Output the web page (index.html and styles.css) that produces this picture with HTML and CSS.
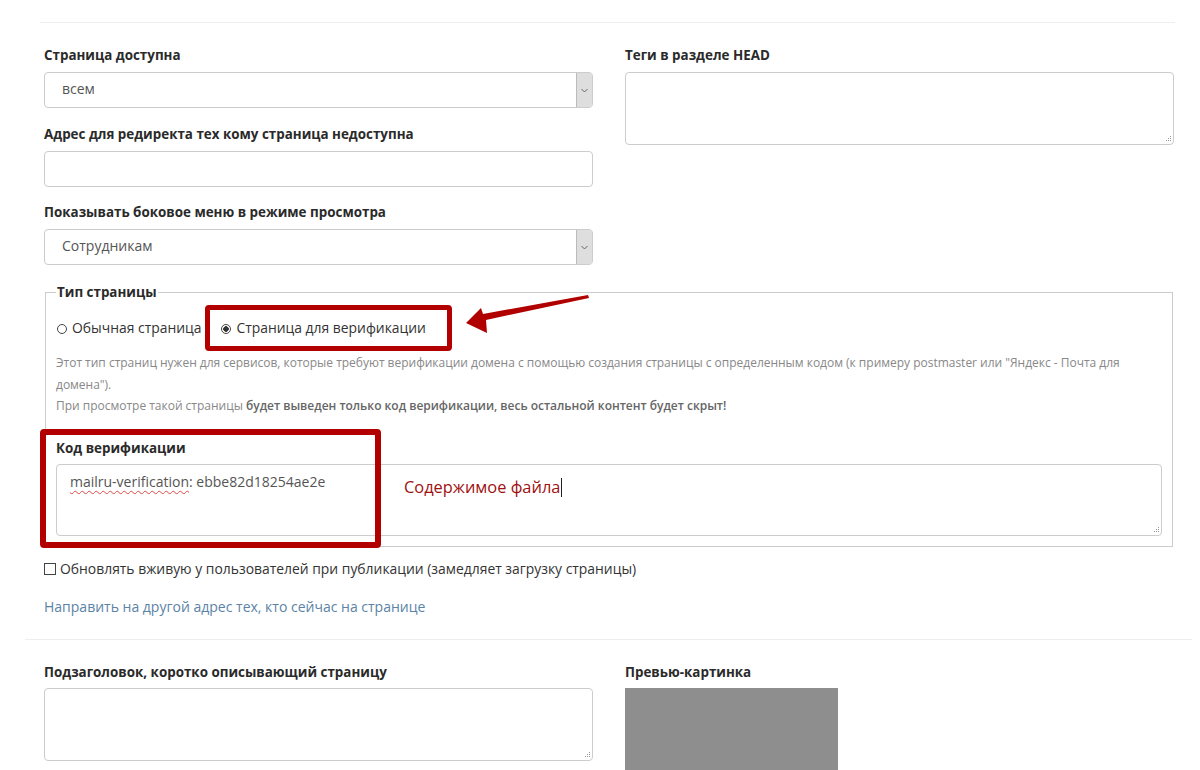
FILE: index.html
```html
<!doctype html>
<html lang="ru">
  <head>
    <meta charset="utf-8" />
    <title>Настройки страницы</title>
    <link rel="stylesheet" href="styles.css">
  </head>
  <body>
    <div class="page">
      <div class="rule"></div>

      <div class="columns">
        <div class="col">
          <div class="field">
            <label>Страница доступна</label>
            <div class="select">
              <span class="select-value">всем</span>
              <span class="select-btn"><svg width="7" height="5" viewBox="0 0 7 5"><path d="M0.5 1 L3.5 4 L6.5 1" fill="none" stroke="#666" stroke-width="1"/></svg></span>
            </div>
          </div>
          <div class="field">
            <label>Адрес для редиректа тех кому страница недоступна</label>
            <div class="input"></div>
          </div>
          <div class="field">
            <label>Показывать боковое меню в режиме просмотра</label>
            <div class="select">
              <span class="select-value">Сотрудникам</span>
              <span class="select-btn"><svg width="7" height="5" viewBox="0 0 7 5"><path d="M0.5 1 L3.5 4 L6.5 1" fill="none" stroke="#666" stroke-width="1"/></svg></span>
            </div>
          </div>
        </div>
        <div class="col">
          <div class="field">
            <label>Теги в разделе HEAD</label>
            <div class="textarea head-tags">
              <svg class="grip" width="7" height="7" viewBox="0 0 7 7"><path d="M6 1h1v1H6zM4 3h1v1H4zM6 3h1v1H6zM2 5h1v1H2zM4 5h1v1H4zM6 5h1v1H6z" fill="#999"/></svg>
            </div>
          </div>
        </div>
      </div>

      <fieldset class="page-type">
        <legend>Тип страницы</legend>
        <div class="radios">
          <span class="radio"><span class="dot"></span>Обычная страница</span>
          <span class="radio checked"><span class="dot"></span>Страница для верификации</span>
        </div>
        <div class="hint">
          <p>Этот тип страниц нужен для сервисов, которые требуют верификации домена с помощью создания страницы с определенным кодом (к примеру postmaster или "Яндекс - Почта для домена").</p>
          <p>При просмотре такой страницы <b>будет выведен только код верификации, весь остальной контент будет скрыт!</b></p>
        </div>
        <div class="field verify">
          <label>Код верификации</label>
          <div class="textarea code">
            <span class="typo">mailru-verification</span>: ebbe82d18254ae2e
            <svg class="grip" width="7" height="7" viewBox="0 0 7 7"><path d="M6 1h1v1H6zM4 3h1v1H4zM6 3h1v1H6zM2 5h1v1H2zM4 5h1v1H4zM6 5h1v1H6z" fill="#999"/></svg>
          </div>
        </div>
      </fieldset>

      <div class="check"><span class="box"></span>Обновлять вживую у пользователей при публикации (замедляет загрузку страницы)</div>
      <a class="redirect-link" href="#">Направить на другой адрес тех, кто сейчас на странице</a>

      <div class="rule wide"></div>

      <div class="columns lower">
        <div class="col">
          <div class="field">
            <label>Подзаголовок, коротко описывающий страницу</label>
            <div class="textarea subtitle">
              <svg class="grip" width="7" height="7" viewBox="0 0 7 7"><path d="M6 1h1v1H6zM4 3h1v1H4zM6 3h1v1H6zM2 5h1v1H2zM4 5h1v1H4zM6 5h1v1H6z" fill="#999"/></svg>
            </div>
          </div>
        </div>
        <div class="col">
          <div class="field">
            <label>Превью-картинка</label>
            <div class="preview"></div>
          </div>
        </div>
      </div>

      <!-- annotations drawn over the form -->
      <div class="mark mark-radio"></div>
      <div class="mark mark-code"></div>
      <span class="note">Содержимое файла<span class="caret"></span></span>
      <svg class="arrow" width="130" height="45" viewBox="0 0 130 45">
        <polygon points="1,28 16,13 18,19 123,0 124,3 21,25 22,38" fill="#b00000"/>
      </svg>
    </div>
  </body>
</html>
```

FILE: styles.css
```css
html {
  background: #fff;
}

body {
  margin: 0;
  font-family: "Open Sans", sans-serif;
  color: #333;
}

.page {
  position: relative;
  width: 1130px;
  margin-left: 44px;
  padding-top: 22px;
}

.rule {
  height: 1px;
  background: #eee;
  margin: 0 -1px 0 -4px;
}

.rule.wide {
  margin: 22px -18px 0 -19px;
}

.columns {
  display: grid;
  grid-template-columns: 549px 549px;
  column-gap: 32px;
  margin-top: 22px;
}

.columns.lower {
  margin-top: 22px;
}

.field label {
  display: block;
  font-weight: bold;
  font-size: 13.4px;
  line-height: 20px;
  margin-bottom: 7px;
  color: #2a2a2a;
}

.field + .field {
  margin-top: 15.5px;
}

.select,
.input,
.textarea {
  box-sizing: border-box;
  border: 1px solid #ccc;
  border-radius: 4px;
  background: #fff;
}

.select {
  height: 36px;
  display: flex;
  align-items: stretch;
}

.select-value {
  flex: 1;
  padding-left: 17px;
  font-size: 14px;
  line-height: 32px;
  color: #555;
}

.select-btn {
  width: 15px;
  display: flex;
  align-items: center;
  justify-content: center;
  background: #dedede;
  border-left: 1px solid #bbb;
  border-radius: 0 3px 3px 0;
}

.input {
  height: 36px;
}

.textarea {
  position: relative;
  height: 73px;
}

.grip {
  position: absolute;
  right: 2px;
  bottom: 2px;
}

.page-type {
  margin: 17px 1px 0;
  padding: 0 10px 10px;
  border: 1px solid #ccc;
}

.page-type legend {
  padding: 0 1px;
  font-weight: bold;
  font-size: 13.4px;
  line-height: 20px;
  color: #2a2a2a;
}

.radios {
  display: flex;
  gap: 19px;
  margin-top: 15px;
  font-size: 13.9px;
  line-height: 22px;
  color: #333;
}

.radio {
  display: flex;
  align-items: center;
}

.radio .dot {
  box-sizing: border-box;
  width: 10px;
  height: 10px;
  margin: 1px 5px 0 1px;
  border: 1px solid #444;
  border-radius: 50%;
  background: #fff;
}

.radio.checked .dot {
  background: radial-gradient(circle, #333 0 2.5px, #fff 3px);
}

.hint {
  margin-top: 13px;
  font-size: 12px;
  line-height: 21.5px;
  letter-spacing: -0.015px;
  color: #888;
}

.hint p {
  margin: 0;
}

.hint b {
  font-weight: 600;
  color: #666;
}

.verify {
  margin-top: 21px;
}

.verify label {
  margin-bottom: 6px;
}

.textarea.code {
  height: 72px;
  padding: 6px 13px;
  font-size: 14px;
  line-height: 22px;
  color: #555;
}

.typo {
  text-decoration: underline wavy #e04848;
  text-decoration-thickness: 1px;
  text-underline-offset: 3px;
}

.check {
  display: flex;
  align-items: center;
  margin-top: 12px;
  font-size: 13.9px;
  line-height: 20px;
  color: #333;
}

.check .box {
  box-sizing: border-box;
  width: 12px;
  height: 12px;
  margin-right: 4px;
  border: 1px solid #444;
  background: #fff;
}

.redirect-link {
  display: block;
  margin-top: 18px;
  font-size: 14px;
  line-height: 20px;
  color: #5b83a6;
  text-decoration: none;
}

.preview {
  width: 213px;
  height: 90px;
  background: #8e8e8e;
}

.lower .field label {
  margin-bottom: 6px;
}

.textarea.subtitle {
  height: 73px;
}

.mark {
  position: absolute;
  border: 5px solid #b20000;
  border-radius: 4px;
}

.mark-radio {
  left: 161px;
  top: 305px;
  width: 237px;
  height: 36px;
}

.mark-code {
  left: -4px;
  top: 429px;
  width: 329px;
  height: 107px;
  border-width: 6px;
}

.note {
  position: absolute;
  left: 360px;
  top: 476px;
  font-size: 16.4px;
  line-height: 22px;
  color: #a01010;
}

.caret {
  display: inline-block;
  width: 1px;
  height: 19px;
  margin-left: 1px;
  vertical-align: -4px;
  background: #222;
}

.arrow {
  position: absolute;
  left: 421px;
  top: 295px;
}
```
